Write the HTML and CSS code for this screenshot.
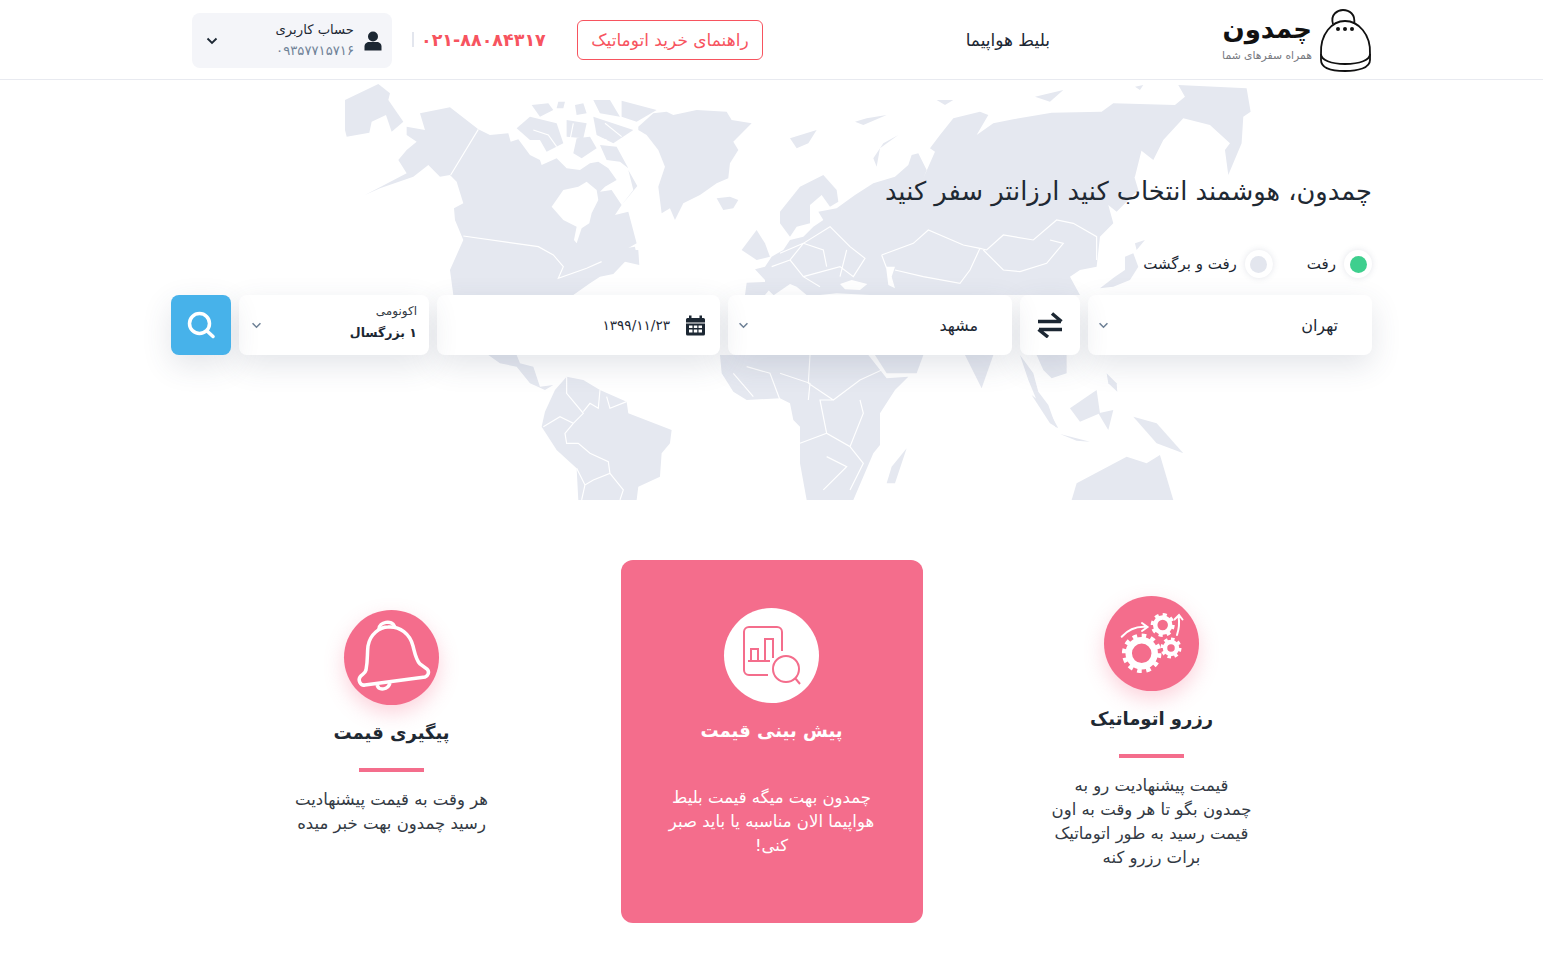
FILE: index.html
```html
<!DOCTYPE html>
<html lang="fa" dir="rtl">
<head>
    <meta charset="UTF-8">
    <meta name="viewport" content="width=device-width, initial-scale=1.0">
    <title>چمدون</title>
    <link rel="stylesheet" href="styles.css">
</head>
<body>
    <header class="site-header">
        <div class="logo">
            <svg class="logo-bag" viewBox="0 0 54 64" width="54" height="64">
                <path d="M15 16C12 6 20 2 25 2C31 2 38 6 36 16"/>
                <path d="M3 46C2 26 14 13 27 13C40 13 53 26 52 46C52 52 42 56 27 56C13 56 3 52 3 46Z"/>
                <path d="M3 46V52C3 60 14 63 27 63C40 63 52 60 52 52V46"/>
                <circle class="dot" cx="20" cy="21" r="2"/><circle class="dot" cx="27" cy="21" r="2"/><circle class="dot" cx="34" cy="21" r="2"/>
            </svg>
            <div class="logo-text">
                <div class="logo-name">چمدون</div>
                <div class="logo-sub">همراه سفرهای شما</div>
            </div>
        </div>
        <a class="nav-link">بلیط هواپیما</a>
        <a class="guide-btn">راهنمای خرید اتوماتیک</a>
        <span class="phone">۰۲۱-۸۸۰۸۴۳۱۷</span>
        <span class="header-sep"></span>
        <div class="account">
            <svg class="account-icon" viewBox="0 0 20 20" width="20" height="20">
                <circle cx="10" cy="5.5" r="5"/>
                <path d="M1.5 19.5V15.5C1.5 12.5 4 11 6 11H14C16 11 18.5 12.5 18.5 15.5V19.5Z"/>
            </svg>
            <div class="account-text">
                <div class="account-title">حساب کاربری</div>
                <div class="account-phone">۰۹۳۵۷۷۱۵۷۱۶</div>
            </div>
            <svg class="account-chevron" viewBox="0 0 12 8" width="12" height="8"><path d="M1.5 1.5L6 6L10.5 1.5"/></svg>
        </div>
    </header>

    <section class="hero">
        <!-- world map behind the search form -->
        <svg class="world-map" viewBox="0 0 1543 420" width="1543" height="420">
            <g transform="translate(300 0) scale(.3333)">
                <path d="M135 60L235 12L270 40L265 60L310 125L275 155L258 105L215 125L208 158L140 170L135 150Z"/>
                <path d="M360 100L450 82L535 148L570 165L625 160L632 185L655 178L690 225L720 240L725 255L770 235L800 265L840 270L870 250L895 245L925 265L950 300L915 320L900 335L935 330L965 375L990 345L1012 318L985 270L1000 330L965 375L945 405L985 395L1010 490L975 510L1015 510L1018 555L975 545L940 582L900 590L870 610L820 645H460L450 570L490 480L465 420L462 385L490 370L470 305L450 285L420 290L385 255L340 290L240 325L195 345L320 280L295 240L320 210L350 185L320 165L320 140L375 150Z"/>
                <path class="sea" d="M755 380L790 330L835 320L860 305L890 330L895 360L875 400L868 430L845 445L830 490L822 480L830 440L790 420Z"/>
                <path d="M695 75L745 70L760 90L720 110Z"/><path d="M775 65L795 65L790 85L770 85Z"/><path d="M825 75L850 70L860 100L830 105Z"/><path d="M880 60L930 60L960 110L900 100Z"/><path d="M965 62L1070 90L1010 125L965 110Z"/>
                <path d="M650 145L690 110L770 130L790 190L740 215L720 180L690 180Z"/><path d="M800 120L860 130L850 175L800 170Z"/><path d="M880 110L1000 150L940 190L890 165Z"/><path d="M830 175L870 170L890 205L845 235L820 220Z"/>
                <path d="M900 195L950 200L985 265L960 245L920 240Z"/><path d="M975 505L1005 500L1015 550L975 540Z"/>
                <path class="line" d="M700 150L745 165L770 200M820 130L810 180M880 170L920 180M915 130L965 170"/>
                <path d="M1015 140L1060 100L1100 95L1120 105L1190 90L1280 95L1295 120L1355 130L1300 185L1315 210L1290 250L1285 295L1250 310L1200 345L1150 370L1125 420L1110 385L1085 400L1075 320L1095 260L1075 210L1040 165L1015 150Z"/>
                <path d="M1250 355L1290 350L1315 360L1300 385L1270 390Z"/>
                <path d="M1325 510L1370 450L1395 490L1410 530L1370 540Z"/>
                <path d="M565 825H650L660 850L700 860L720 920L760 915L735 930L690 910L650 860L600 850Z"/>
                <path d="M800 890L850 900L900 930L980 965L985 1000L1115 1050L1110 1090L1085 1120L1080 1190L1015 1220L1010 1260H835L830 1165L770 1110L725 1040L735 995L765 930Z"/>
                <path class="line" d="M535 148L452 285M490 468L715 500L760 525L790 560L775 595L860 565L905 545M800 890L800 940L850 1000L820 1030L780 1010L730 1040M820 1030L795 1060L800 1090L835 1090L870 1120L925 1145L930 1180L880 1200L855 1215L830 1165M900 930L895 985L870 970L850 995M920 950L930 985L980 965M855 1215L845 1260M930 1180L970 1230L960 1260"/>
            </g>
            <g transform="translate(780 0) scale(.3333)">
                <path d="M0 395L0 430L30 470L50 440L90 430L90 375L125 345L150 380L175 365L170 330L130 285L60 320Z"/>
                <path d="M-100 608L-30 605L-20 615L-45 645H-105ZM-45 600L-75 568L-45 560L-25 530L10 510L30 480L70 470L100 440L130 420L115 395L170 385L225 345L280 310L345 290L385 255L395 225L415 220L440 270L430 295L465 215L450 205L480 165L520 115L600 95L625 105L590 165L640 130L700 118L815 98L965 95L1000 70L1185 75L1215 50L1195 15L1400 25L1412 95L1390 110L1385 190L1345 285L1335 210L1350 190L1290 135L1210 115L1150 180L1120 240L1075 205L1060 280L1075 330L1010 395L985 375L1000 430L960 470L950 560L900 570L870 590L900 645H-20L-45 620Z"/>
                <path d="M355 165L300 205L290 260L280 235L310 190Z"/><path d="M30 175L110 150L85 190L50 205Z"/><path d="M225 125L260 115L320 105L250 135Z"/><path d="M470 60L520 60L495 75Z"/><path d="M765 50L850 30L810 65Z"/><path d="M1065 20L1090 15L1080 30Z"/>
                <path d="M1035 530L1060 520L1075 560L1050 600L1000 620L960 625L1005 590L1035 570Z"/><path d="M1065 490L1095 480L1070 510Z"/><path d="M1070 205L1090 190L1065 290L1050 300Z"/>
                <path class="sea" d="M180 612L215 600L262 612L240 630L195 628Z"/><path class="sea" d="M318 560L345 560L335 590L345 625L325 615Z"/><path class="sea" d="M-18 645L30 612L50 620L80 645Z"/><path class="sea" d="M120 645L170 640L270 645Z"/>
                <path d="M-180 825L-175 880L-140 935L-100 960L0 955L30 970L40 1020L60 1040L60 1150L80 1260H220L280 1120L300 1095L300 1000L345 930L385 890L320 895L265 825Z"/>
                <path d="M285 825L320 880L410 880L430 825Z"/><path d="M555 825L605 925L640 825Z"/><path d="M720 825L760 880L775 935L805 975L830 1045L800 1010L770 960L745 900Z"/><path d="M770 825H860V880L815 895L790 870Z"/>
                <path d="M755 945L800 980L835 1045L810 1030Z"/><path d="M840 1062L930 1085L890 1082Z"/><path d="M870 985L950 930L960 1000L900 1025Z"/><path d="M955 1000L1000 990L985 1050Z"/><path d="M980 880L1010 910L1012 935L985 910Z"/>
                <path d="M1060 1010L1130 1030L1210 1120L1130 1090Z"/><path d="M875 1260L890 1210L1040 1130L1100 1150L1140 1125L1180 1260Z"/><path d="M380 1105L345 1210L320 1210L335 1160Z"/>
                <path class="line" d="M305 525L400 490L445 450L550 495L600 505L620 510L670 465L760 480L830 420L880 430L950 470L950 540M610 510L670 570L720 575L800 550L850 490L810 480M305 525L320 565M600 505L570 570L540 610L430 590L345 570M210 500L150 440L70 490L30 540L70 590L120 620M150 440L210 500L255 535L220 590L180 560L70 590M0 520L70 490M-25 560L30 540M70 490L130 510L140 560M200 510L180 590"/>
                <path class="line" d="M90 825L85 910L160 960L240 900L305 870M160 960L120 960L140 1060L210 1100L250 1000L240 960M0 880L90 910L85 960M-100 860L-30 880L0 960M140 1060L60 1090M210 1100L250 1150L210 1230M140 1130L200 1160L130 1230M-140 880L-80 950"/>
            </g>
        </svg>

        <div class="hero-inner">
            <h1 class="hero-title">چمدون، هوشمند انتخاب کنید ارزانتر سفر کنید</h1>
            <div class="trip-type">
                <label class="radio"><span class="radio-dot active"></span>رفت</label>
                <label class="radio"><span class="radio-dot"></span>رفت و برگشت</label>
            </div>
            <div class="search-bar">
                <div class="field field-city">
                    <span class="field-value">تهران</span>
                    <svg class="chevron" viewBox="0 0 12 8" width="11" height="7"><path d="M1.5 1.5L6 6L10.5 1.5"/></svg>
                </div>
                <button class="swap-btn">
                    <svg viewBox="0 0 26 26" width="26" height="26"><path d="M1 9.500H24M15 1.500L24.500 9.500"/><path d="M25 17.500H2M11 25L1.500 17.500"/></svg>
                </button>
                <div class="field field-city">
                    <span class="field-value">مشهد</span>
                    <svg class="chevron" viewBox="0 0 12 8" width="11" height="7"><path d="M1.5 1.5L6 6L10.5 1.5"/></svg>
                </div>
                <div class="field field-date">
                    <svg class="calendar" viewBox="0 0 21 21" width="21" height="21">
                        <path d="M1 4.500A1.500 1.500 0 0 1 2.500 3H4V0.500H6.500V3H14.500V0.500H17V3H18.500A1.500 1.500 0 0 1 20 4.500V7.500H1ZM1 8.500H20V19A1.500 1.500 0 0 1 18.500 20.500H2.500A1.500 1.500 0 0 1 1 19ZM4 10.500V13H7.500V10.500ZM8.800 10.500V13H12.300V10.500ZM13.500 10.500V13H17V10.500ZM4 14.500V17.500H7.500V14.500ZM8.800 14.500V17.500H12.300V14.500ZM13.500 14.500V17.500H17V14.500Z" fill-rule="evenodd"/>
                    </svg>
                    <span class="date-value">۱۳۹۹/۱۱/۲۳</span>
                </div>
                <div class="field field-pass">
                    <div class="pass-text">
                        <div class="pass-class">اکونومی</div>
                        <div class="pass-count">۱ بزرگسال</div>
                    </div>
                    <svg class="chevron" viewBox="0 0 12 8" width="11" height="7"><path d="M1.5 1.5L6 6L10.5 1.5"/></svg>
                </div>
                <button class="search-btn">
                    <svg viewBox="0 0 28 28" width="28" height="28"><circle cx="12.500" cy="12.500" r="10"/><path d="M20 20L26 25.500"/></svg>
                </button>
            </div>
        </div>
    </section>

    <section class="features">
        <div class="feature feature-auto">
            <div class="feature-icon">
                <svg viewBox="0 0 95 95" width="95" height="95">
                    <circle class="gear-ring" cx="37.700" cy="57.300" r="13" stroke-width="6.500"/>
                    <circle class="gear-teeth" cx="37.700" cy="57.300" r="17.500" stroke-width="4.500" pathLength="24"/>
                    <circle class="gear-ring" cx="58.700" cy="29" r="7.500" stroke-width="4.500"/>
                    <circle class="gear-teeth" cx="58.700" cy="29" r="10.500" stroke-width="3" pathLength="16"/>
                    <circle class="gear-ring" cx="67" cy="52" r="6" stroke-width="4.500"/>
                    <circle class="gear-teeth" cx="67" cy="52" r="9" stroke-width="3" pathLength="16"/>
                    <path class="gear-line" d="M17.700 40.700C23 35 32 30 42.700 31M38 27L43.500 31L38 35M73 39C75 33 75.500 26 74.500 20M70.500 23.500L75 19L78.500 23.500"/>
                </svg>
            </div>
            <h3 class="feature-title">رزرو اتوماتیک</h3>
            <div class="feature-rule"></div>
            <p class="feature-text">قیمت پیشنهادیت رو به<br>چمدون بگو تا هر وقت به اون<br>قیمت رسید به طور اتوماتیک<br>برات رزرو کنه</p>
        </div>
        <div class="feature feature-predict">
            <div class="feature-icon">
                <svg viewBox="0 0 95 95" width="95" height="95">
                    <path d="M58 43V24A5 5 0 0 0 53 19H25A5 5 0 0 0 20 24V62A5 5 0 0 0 25 67H44"/>
                    <path d="M24 53H46M27 52V41H34V52M41 52V31H49V50"/>
                    <circle cx="62" cy="61" r="13"/>
                    <path d="M71 70L76 76"/>
                </svg>
            </div>
            <h3 class="feature-title">پیش بینی قیمت</h3>
            <div class="feature-rule"></div>
            <p class="feature-text">چمدون بهت میگه قیمت بلیط<br>هواپیما الان مناسبه یا باید صبر<br>کنی!</p>
        </div>
        <div class="feature feature-track">
            <div class="feature-icon">
                <svg viewBox="0 0 95 95" width="95" height="95">
                    <path d="M22 60C24 50 23 44 24 36C26 24 36 17 44 17C56 16 66 24 69 36C71 44 72 50 76 54L83 59C86 62 84 66 81 67L21 75C16 76 14 70 16 67C18 64 21 64 22 60Z"/>
                    <path d="M35 19C35 12 48 9 51 17"/>
                    <path d="M33 75C35 81 44 80 46 73"/>
                </svg>
            </div>
            <h3 class="feature-title">پیگیری قیمت</h3>
            <div class="feature-rule"></div>
            <p class="feature-text">هر وقت به قیمت پیشنهادیت<br>رسید چمدون بهت خبر میده</p>
        </div>
    </section>
</body>
</html>
```

FILE: styles.css
```css
* {
    margin: 0;
    padding: 0;
    box-sizing: border-box;
}

body {
    font-family: 'DejaVu Sans', 'Noto Sans', sans-serif;
    background-color: #ffffff;
    color: #1c2733;
    height: 973px;
    overflow: hidden;
}

/* header */
.site-header {
    height: 80px;
    display: flex;
    align-items: center;
    padding: 0 171px 0 192px;
    border-bottom: 1px solid #e8eaf0;
}

.logo {
    display: flex;
    align-items: center;
    gap: 6px;
    width: 149px;
}

.logo-bag {
    flex: none;
    fill: none;
    stroke: #111111;
    stroke-width: 1.8;
}

.logo-bag .dot {
    fill: #111111;
    stroke: none;
}

.logo-name {
    font-size: 26px;
    font-weight: bold;
    line-height: 24px;
    color: #111111;
    white-space: nowrap;
}

.logo-sub {
    font-size: 10.8px;
    line-height: 12px;
    margin-top: 9px;
    color: #77797f;
    white-space: nowrap;
}

.nav-link {
    font-size: 17px;
    margin-right: 173px;
    white-space: nowrap;
}

.guide-btn {
    margin-right: auto;
    font-size: 17px;
    color: #f7545f;
    border: 1px solid #f7545f;
    border-radius: 6px;
    width: 186px;
    height: 40px;
    line-height: 38px;
    text-align: center;
    white-space: nowrap;
}

.phone {
    margin-right: 33px;
    width: 123px;
    font-size: 17.5px;
    font-weight: bold;
    color: #f7545f;
    white-space: nowrap;
    direction: ltr;
    text-align: center;
}

.header-sep {
    width: 2px;
    height: 15px;
    margin: 0 7px 0 20px;
    background-color: #e3e6ee;
}

.account {
    width: 200px;
    height: 55px;
    margin-top: 2px;
    background-color: #f4f5f9;
    border-radius: 8px;
    display: flex;
    align-items: center;
    padding: 0 9px 0 14px;
}

.account-icon {
    fill: #1c2733;
    flex: none;
}

.account-text {
    margin-right: 9px;
}

.account-title {
    font-size: 13.2px;
    line-height: 22px;
    margin-top: -1px;
}

.account-phone {
    font-size: 13.2px;
    line-height: 20px;
    color: #6f8297;
}

.account-chevron {
    margin-right: auto;
    fill: none;
    stroke: #1c2733;
    stroke-width: 1.800;
}

/* hero and search */
.hero {
    position: relative;
    height: 420px;
    overflow: hidden;
}

.world-map {
    position: absolute;
    top: 0;
    left: 0;
    fill: #e5e8f0;
}

.world-map .sea {
    fill: #ffffff;
}

.world-map .line {
    fill: none;
    stroke: #ffffff;
    stroke-width: 3.500;
}

.hero-inner {
    position: relative;
    padding: 95px 171px 0;
}

.hero-title {
    font-size: 25.7px;
    font-weight: normal;
    line-height: 32px;
    color: #1f2933;
}

.trip-type {
    display: flex;
    gap: 34px;
    margin-top: 43px;
    height: 28px;
}

.radio {
    display: flex;
    align-items: center;
    gap: 8px;
    font-size: 15px;
}

.radio-dot {
    width: 28px;
    height: 28px;
    border-radius: 50%;
    background-color: #ffffff;
    box-shadow: 0 0 6px rgba(100, 110, 140, 0.18);
    display: flex;
    align-items: center;
    justify-content: center;
}

.radio-dot::after {
    content: "";
    width: 17px;
    height: 17px;
    border-radius: 50%;
    background-color: #e3e6ee;
}

.radio-dot.active::after {
    background-color: #3ecf8e;
}

.search-bar {
    display: flex;
    gap: 8px;
    margin-top: 17px;
    height: 60px;
}

.field, .swap-btn {
    background-color: #ffffff;
    border: none;
    border-radius: 8px;
    box-shadow: 0 10px 30px rgba(60, 70, 100, 0.14);
    display: flex;
    align-items: center;
}

.field-city {
    width: 284px;
    padding: 0 34px 0 10px;
    font-size: 16px;
}

.chevron {
    margin-right: auto;
    fill: none;
    stroke: #6f8297;
    stroke-width: 1.800;
}

.swap-btn {
    width: 60px;
    justify-content: center;
}

.swap-btn svg {
    fill: none;
    stroke: #1c2733;
    stroke-width: 3.500;
}

.field-date {
    width: 283px;
    padding: 0 14px;
    gap: 15px;
}

.calendar {
    fill: #1c2733;
    flex: none;
}

.date-value {
    font-size: 13.6px;
}

.field-pass {
    width: 190px;
    padding: 0 12px;
}

.pass-class {
    font-size: 12px;
    line-height: 16px;
    color: #333a44;
}

.pass-count {
    font-size: 12.5px;
    font-weight: bold;
    line-height: 28px;
}

.search-btn {
    width: 60px;
    background-color: #47b2ea;
    border: none;
    border-radius: 8px;
    box-shadow: 0 10px 30px rgba(60, 70, 100, 0.14);
    display: flex;
    align-items: center;
    justify-content: center;
}

.search-btn svg {
    fill: none;
    stroke: #ffffff;
    stroke-width: 3.500;
    stroke-linecap: round;
}

/* features */
.features {
    display: grid;
    grid-template-columns: repeat(3, 302px);
    gap: 78px;
    justify-content: center;
    margin-top: 60px;
    height: 363px;
}

.feature {
    text-align: center;
    border-radius: 12px;
    display: flex;
    flex-direction: column;
    align-items: center;
    color: #333a44;
}

.feature-auto {
    padding-top: 36px;
}

.feature-predict {
    padding-top: 48px;
    background-color: #f46d8c;
    color: #ffffff;
}

.feature-track {
    padding-top: 50px;
}

.feature-icon {
    width: 95px;
    height: 95px;
    border-radius: 50%;
    background-color: #f46d8c;
    box-shadow: 0 8px 20px rgba(244, 109, 140, 0.3);
    line-height: 0;
}

.feature-icon svg {
    fill: none;
    stroke: #ffffff;
    stroke-width: 3.500;
}

.feature-predict .feature-icon {
    background-color: #ffffff;
    box-shadow: none;
}

.feature-predict .feature-icon svg {
    stroke: #f46d8c;
    stroke-width: 2;
}

.gear-teeth {
    stroke-dasharray: 1 1;
}

.gear-line {
    stroke-width: 2;
    stroke-linecap: round;
}

.feature-title {
    font-size: 18px;
    font-weight: bold;
    line-height: 28px;
    margin-top: 14px;
    color: #1f2933;
}

.feature-predict .feature-title {
    color: #ffffff;
}

.feature-rule {
    width: 65px;
    height: 4px;
    margin-top: 21px;
    background-color: #f46d8c;
}

.feature-text {
    font-size: 16.5px;
    line-height: 24px;
    margin-top: 16px;
    white-space: nowrap;
}
```
